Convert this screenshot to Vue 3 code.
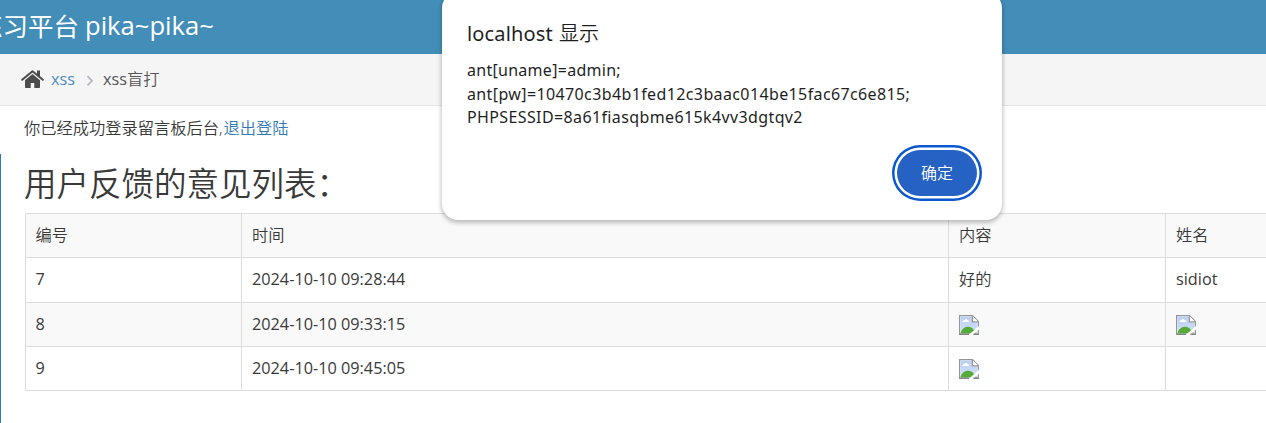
<script setup>
const rows = [
  { id: '7', time: '2024-10-10 09:28:44', content: '好的', name: 'sidiot' },
  { id: '8', time: '2024-10-10 09:33:15', content: null, name: null },
  { id: '9', time: '2024-10-10 09:45:05', content: null, name: '' },
]
</script>

<template>
  <div class="page">
    <svg class="defs" width="0" height="0">
      <defs>
        <linearGradient id="sky" x1="0" y1="0" x2="0" y2="1">
          <stop offset="0" stop-color="#b9cff5" />
          <stop offset="1" stop-color="#d3e1fa" />
        </linearGradient>
        <symbol id="broken" viewBox="0 0 20 20">
          <path d="M.6.6H13.5L19.4 6.5V19.4H.6Z" fill="#fff" stroke="#969696" stroke-width="1.3" />
          <path d="M1.500 1.500H12.700V7.300H18.500V18.500H1.500Z" fill="url(#sky)" />
          <path d="M3.500 7C3.300 5.500 5 5 5.500 5.300C6 3.500 8.400 3.700 8.600 5.200C10 5 10.600 6.200 10.200 7Z" fill="#fff" />
          <path d="M1.500 18C4 10.500 12 10.500 14.500 14.500L18 18.500H1.500Z" fill="#55ab38" />
          <path d="M13.300.8V6.800H19.200" fill="#fff" stroke="#969696" stroke-width="1.300" />
          <path d="M20 11L9.500 20H14L20 14.500Z" fill="#fff" />
          <path d="M.6 19.300H10M14.500 19.300H20" stroke="#858585" stroke-width="1.400" />
        </symbol>
      </defs>
    </svg>

    <header class="navbar">
      <span class="brand-cn">练习平台</span><span class="brand-en">pika~pika~</span>
    </header>

    <nav class="crumbs">
      <svg class="home" width="23" height="19" viewBox="0 0 23 19">
        <path d="M11.500 4L19 10.300V17.200Q19 18 18.200 18H13.300V13H9.700V18H4.800Q4 18 4 17.200V10.300Z" fill="#4c4c4c" />
        <path d="M1.200 9.800L11.500 1.200L21.800 9.800" fill="none" stroke="#4c4c4c" stroke-width="2" stroke-linecap="round" stroke-linejoin="round" />
        <path d="M16 .5H19V7.200L16 4.700Z" fill="#4c4c4c" />
      </svg>
      <a class="crumb-link">xss</a>
      <svg class="sep" width="8" height="12" viewBox="0 0 8 12">
        <path d="M1.500 1.200L6 5.800L1.500 10.400" fill="none" stroke="#b2b6bf" stroke-width="1.700" />
      </svg>
      <span class="crumb-now">xss<span class="thin">盲打</span></span>
    </nav>

    <main class="body">
      <div class="rail"></div>
      <p class="notice">你已经成功登录留言板后台,<a>退出登陆</a></p>
      <h2 class="title">用户反馈的意见列表：</h2>
      <table class="list">
        <colgroup>
          <col class="c-id" /><col class="c-time" /><col class="c-content" /><col class="c-name" />
        </colgroup>
        <tbody>
          <tr class="r-head thin"><td>编号</td><td>时间</td><td>内容</td><td>姓名</td></tr>
          <tr v-for="r in rows" :key="r.id" :class="'r-' + r.id">
            <td>{{ r.id }}</td>
            <td>{{ r.time }}</td>
            <td class="thin">
              <svg v-if="r.content === null" class="pic" width="20" height="20"><use href="#broken" /></svg>
              <template v-else>{{ r.content }}</template>
            </td>
            <td>
              <svg v-if="r.name === null" class="pic" width="20" height="20"><use href="#broken" /></svg>
              <template v-else>{{ r.name }}</template>
            </td>
          </tr>
        </tbody>
      </table>
    </main>

    <div class="dialog">
      <div class="d-title"><span class="d-host">localhost</span><span class="thin">显示</span></div>
      <div class="d-text">
        <div class="l1">ant[uname]=admin;</div>
        <div class="l2">ant[pw]=10470c3b4b1fed12c3baac014be15fac67c6e815;</div>
        <div class="l3">PHPSESSID=8a61fiasqbme615k4vv3dgtqv2</div>
      </div>
      <button class="ok">确定</button>
    </div>
  </div>
</template>

<style>
body {
  overflow: hidden;
}
</style>

<style scoped>
.page {
  position: relative;
  width: 1266px;
  height: 423px;
  overflow: hidden;
  background: #fff;
  color: #393939;
  font-family: "Open Sans", "Noto Sans CJK SC", sans-serif;
  font-size: 16.25px;
  font-weight: 400;
  white-space: nowrap;
}
.thin {
  font-weight: 350;
}
.defs {
  position: absolute;
}
.navbar {
  height: 54px;
  box-sizing: border-box;
  background: #438eb9;
  color: #fff;
  display: flex;
  line-height: 51px;
}
.brand-cn {
  font-size: 25.5px;
  line-height: 53px;
  margin-left: -23px;
  width: 108px;
  flex: none;
}
.brand-en {
  font-size: 25.6px;
}
.crumbs {
  height: 52px;
  box-sizing: border-box;
  background: #f5f5f5;
  border-bottom: 1px solid #e5e5e5;
  display: flex;
  align-items: center;
  padding-left: 21px;
  color: #555;
}
.home {
  margin-right: 7px;
}
.crumb-link {
  color: #4c8fbd;
  width: 35px;
  margin-bottom: 2px;
}
.sep {
  margin: 3px 9px 0 0;
}
.crumb-now {
  margin-bottom: 4px;
}
.body {
  position: relative;
  padding-left: 25px;
}
.rail {
  position: absolute;
  left: 0;
  top: 48px;
  width: 1px;
  height: 269px;
  background: #2b7dbc;
}
.notice {
  margin: 0 0 0 -1px;
  padding-top: 10px;
  height: 25px;
  line-height: 24px;
  font-weight: 350;
}
.notice a {
  color: #337ab7;
  margin-left: 1px;
}
.title {
  margin: 14px 0 0 -1px;
  height: 58px;
  line-height: 58px;
  font-size: 32.5px;
  font-weight: 350;
}
.list {
  width: 1357px;
  table-layout: fixed;
  border-collapse: collapse;
}
.c-id {
  width: 216px;
}
.c-content,
.c-name {
  width: 217px;
}
.c-time {
  width: 707px;
}
.list td {
  height: 44px;
  box-sizing: border-box;
  padding: 0 10px 2px;
  border: 1px solid #ddd;
  line-height: 24px;
  vertical-align: middle;
}
.list td:first-child {
  padding-left: 9.5px;
}
.list .r-7 td {
  height: 45px;
}
.list tr:nth-child(odd) {
  background: #f9f9f9;
}
.pic {
  display: block;
  margin-top: 3px;
}
.dialog {
  position: absolute;
  left: 442px;
  top: -8px;
  width: 560px;
  height: 228px;
  box-sizing: border-box;
  padding: 28px 25px 0;
  border-radius: 16px;
  background: #fff;
  box-shadow: 0 2px 4px 1px rgba(0, 0, 0, 0.24);
  color: #1f1f1f;
  font-family: "Noto Sans", "Noto Sans CJK SC", sans-serif;
}
.d-title {
  display: flex;
  font-size: 20px;
  line-height: 28px;
}
.d-host {
  width: 92px;
  letter-spacing: 0.15px;
}
.d-text {
  margin-top: 11px;
  font-size: 16px;
  line-height: 23.5px;
  letter-spacing: 0.38px;
}
.l1 {
  letter-spacing: 0.28px;
}
.ok {
  position: absolute;
  left: 455px;
  top: 158px;
  width: 80px;
  height: 46px;
  padding: 0 0 2px;
  border: 0;
  border-radius: 23px;
  background: #2562c3;
  color: #fff;
  font: 350 16px "Noto Sans CJK SC", sans-serif;
  box-shadow: 0 0 0 2.500px #fff, 0 0 0 5px #0b57d0;
}
</style>
